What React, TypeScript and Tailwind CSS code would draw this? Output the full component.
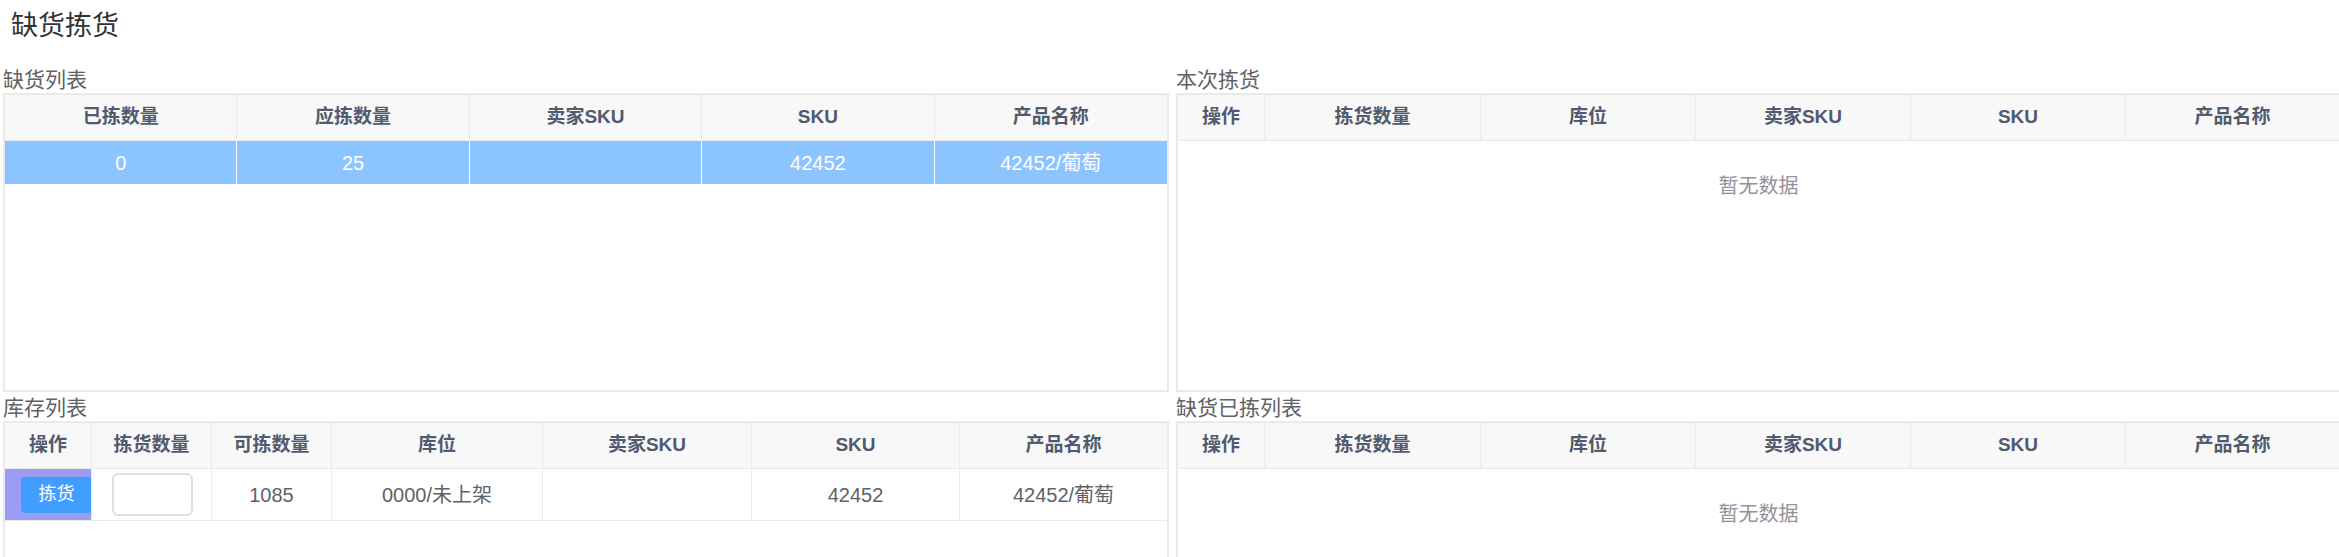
import React from "react";

const font = { fontFamily: '"Liberation Sans", "Noto Sans CJK SC", sans-serif' };

function HeaderCell({ children, last }: { children?: React.ReactNode; last?: boolean }) {
  return (
    <div
      className={`h-[46px] flex items-center justify-center bg-[#f8f8f9] border-b border-[#e8eaec] text-[19px] font-bold text-[#515a6e] ${
        last ? "" : "border-r"
      }`}
    >
      {children}
    </div>
  );
}

function Label({ children }: { children: React.ReactNode }) {
  return <div className="h-[29px] pt-[4px] leading-[24px] text-[21px] text-[#606266] whitespace-nowrap">{children}</div>;
}

function EmptyTable({ heightClass }: { heightClass: string }) {
  const headers = ["操作", "拣货数量", "库位", "卖家SKU", "SKU", "产品名称"];
  return (
    <div className={`border-2 border-[#e8eaec] ${heightClass} overflow-hidden`}>
      <div className="grid grid-cols-[87px_216px_215px_215px_215px_1fr]">
        {headers.map((h, i) => (
          <HeaderCell key={i} last={i === headers.length - 1}>
            {h}
          </HeaderCell>
        ))}
      </div>
      <div className="h-[89px] flex items-center justify-center text-[20px] text-[#909399]">暂无数据</div>
    </div>
  );
}

export default function App() {
  const topHeaders = ["已拣数量", "应拣数量", "卖家SKU", "SKU", "产品名称"];
  const topRow = ["0", "25", "", "42452", "42452/葡萄"];
  const stockHeaders = ["操作", "拣货数量", "可拣数量", "库位", "卖家SKU", "SKU", "产品名称"];

  return (
    <div className="w-[2339px] h-[557px] overflow-hidden bg-white" style={font}>
      <div className="pl-[11px] pt-[6px] h-[46px] leading-[40px] text-[27px] text-[#333333] whitespace-nowrap">缺货拣货</div>
      <div className="h-[18px]" />
      <div className="flex pl-[3px] gap-[7px] w-[2345px]">
        {/* Left column */}
        <div className="w-[1166px] shrink-0 flex flex-col">
          <Label>缺货列表</Label>
          <div className="border-2 border-[#e8eaec] h-[299px] overflow-hidden">
            <div className="grid grid-cols-5">
              {topHeaders.map((h, i) => (
                <HeaderCell key={i} last={i === topHeaders.length - 1}>
                  {h}
                </HeaderCell>
              ))}
            </div>
            <div className="grid grid-cols-5 bg-[#8cc4ff]">
              {topRow.map((c, i) => (
                <div
                  key={i}
                  className={`h-[44px] flex items-center justify-center text-[20px] text-white border-b border-white ${
                    i === topRow.length - 1 ? "" : "border-r"
                  }`}
                >
                  {c}
                </div>
              ))}
            </div>
          </div>
          <Label>库存列表</Label>
          <div className="border-2 border-[#e8eaec] h-[200px] overflow-hidden">
            <div className="grid grid-cols-[87px_120px_120px_211px_209px_208px_1fr]">
              {stockHeaders.map((h, i) => (
                <HeaderCell key={i} last={i === stockHeaders.length - 1}>
                  {h}
                </HeaderCell>
              ))}
              {/* data row */}
              <div className="h-[52px] bg-[#9d9cf4] flex items-center border-b border-r border-[#e8eaec] overflow-hidden">
                <button className="ml-[16px] shrink-0 w-[71px] h-[36px] rounded-[4px] bg-[#409eff] text-white text-[18px] flex items-center justify-center">
                  拣货
                </button>
              </div>
              <div className="h-[52px] flex items-center border-b border-r border-[#e8eaec] pl-[20px]">
                <div className="w-[81px] h-[43px] rounded-[6px] border-2 border-[#dcdee2] bg-white" />
              </div>
              <div className="h-[52px] flex items-center justify-center border-b border-r border-[#e8eaec] text-[20px] text-[#606266]">1085</div>
              <div className="h-[52px] flex items-center justify-center border-b border-r border-[#e8eaec] text-[20px] text-[#606266]">0000/未上架</div>
              <div className="h-[52px] flex items-center justify-center border-b border-r border-[#e8eaec] text-[20px] text-[#606266]"></div>
              <div className="h-[52px] flex items-center justify-center border-b border-r border-[#e8eaec] text-[20px] text-[#606266]">42452</div>
              <div className="h-[52px] flex items-center justify-center border-b border-[#e8eaec] text-[20px] text-[#606266]">42452/葡萄</div>
            </div>
          </div>
        </div>
        {/* Right column */}
        <div className="w-[1165px] shrink-0 flex flex-col">
          <Label>本次拣货</Label>
          <EmptyTable heightClass="h-[299px]" />
          <Label>缺货已拣列表</Label>
          <EmptyTable heightClass="h-[200px]" />
        </div>
      </div>
    </div>
  );
}
